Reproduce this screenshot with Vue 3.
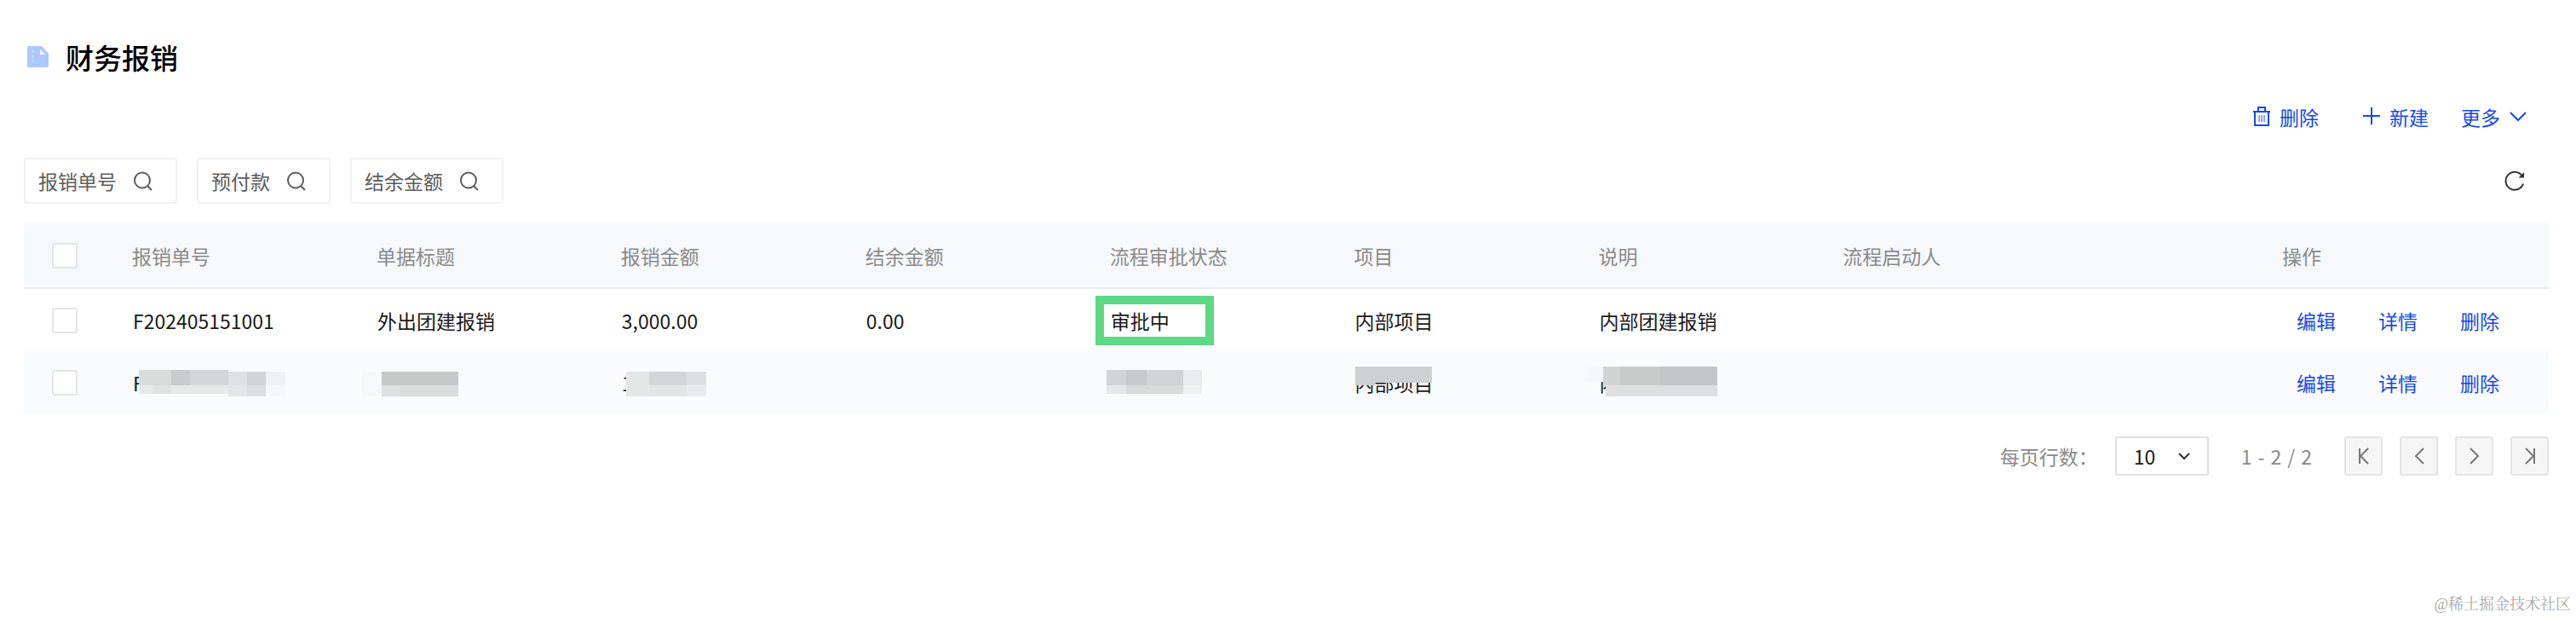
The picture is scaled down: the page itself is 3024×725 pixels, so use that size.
<template>
    <div class="page">
        <header class="title">
            <svg class="title-icon" viewBox="0 0 26 26" aria-hidden="true">
                <path d="M2 0h15l8 9v14a2 2 0 0 1-2 2H2a2 2 0 0 1-2-2V2a2 2 0 0 1 2-2z" fill="#adc8ff" />
                <path d="M15 4v6h6z" fill="#fff" />
                <path d="M6.500 5v14" stroke="#dce8ff" stroke-width="2" stroke-dasharray="2 4" />
            </svg>
            <h1>财务报销</h1>
        </header>

        <div class="toolbar">
            <button type="button" class="tool delete">
                <svg class="icon" viewBox="0 0 24 24">
                    <path d="M2 6h20M8 6V1h8v5M4 6v16h16V6" />
                    <path d="M9 10v8M12 10v8M15 10v8" stroke-width="1" />
                </svg>
                删除
            </button>
            <button type="button" class="tool">
                <svg class="icon" viewBox="0 0 24 24"><path d="M12 1v20M2 11h20" /></svg>
                新建
            </button>
            <button type="button" class="tool">
                更多
                <svg class="icon" viewBox="0 0 24 24"><path d="M3 7l9 9 9-9" /></svg>
            </button>
        </div>

        <div class="filters">
            <button v-for="name in filters" :key="name" type="button" class="filter">
                {{ name }}
                <svg class="icon" viewBox="0 0 24 24">
                    <circle cx="11" cy="11.500" r="9" />
                    <path d="M17 18l5 5" />
                </svg>
            </button>
            <button type="button" class="refresh" aria-label="刷新">
                <svg class="icon" viewBox="0 0 24 24">
                    <path d="M22 15.500A10.500 10.500 0 1 1 20.500 6" />
                    <path d="M23 2v6.500h-6.500z" fill="currentColor" stroke="none" />
                </svg>
            </button>
        </div>

        <table>
            <colgroup>
                <col class="col-check" />
                <col v-for="n in 7" :key="n" class="col-data" />
                <col />
                <col class="col-action" />
            </colgroup>
            <thead>
                <tr>
                    <th class="check"><input v-model="allChecked" type="checkbox" aria-label="全选" /></th>
                    <th v-for="col in columns" :key="col">{{ col }}</th>
                    <th>操作</th>
                </tr>
            </thead>
            <tbody>
                <tr v-for="(row, i) in rows" :key="i">
                    <td class="check"><input v-model="row.checked" type="checkbox" aria-label="选择" /></td>
                    <td v-for="(cell, j) in row.cells" :key="j">
                        {{ cell.text }}
                        <span v-if="cell.marked" class="mark"></span>
                        <svg v-if="cell.mask" class="mask" aria-hidden="true">
                            <rect v-for="(m, k) in cell.mask" :key="k" :x="m[0]" :y="m[1]" :width="m[2]" :height="m[3]" :fill="m[4]" />
                        </svg>
                    </td>
                    <td>
                        <div class="actions">
                            <a href="#" @click.prevent>编辑</a>
                            <a href="#" @click.prevent>详情</a>
                            <a href="#" @click.prevent="remove(i)">删除</a>
                        </div>
                    </td>
                </tr>
            </tbody>
        </table>

        <footer class="pagination">
            <label for="page-size">每页行数：</label>
            <div class="page-size">
                <select id="page-size" v-model="pageSize">
                    <option :value="10">10</option>
                    <option :value="20">20</option>
                    <option :value="50">50</option>
                </select>
                <svg viewBox="0 0 14 14" aria-hidden="true"><path d="M1 4l6 6 6-6" /></svg>
            </div>
            <div class="range">
                <span>1</span>
                <span>-</span>
                <span>{{ rows.length }}</span>
                <span>/</span>
                <span>{{ rows.length }}</span>
            </div>
            <div class="pager">
                <button v-for="p in pagers" :key="p.label" type="button" :aria-label="p.label">
                    <svg viewBox="0 0 24 24"><path :d="p.path" /></svg>
                </button>
            </div>
        </footer>

        <div class="watermark">@稀土掘金技术社区</div>
    </div>
</template>

<script setup>
import { ref, computed } from 'vue';

const filters = ['报销单号', '预付款', '结余金额'];
const columns = ['报销单号', '单据标题', '报销金额', '结余金额', '流程审批状态', '项目', '说明', '流程启动人'];
const pageSize = ref(10);

// mask: [x, y, width, height, color]
const rows = ref([
    {
        checked: false,
        cells: [
            { text: 'F202405151001' },
            { text: '外出团建报销' },
            { text: '3,000.00' },
            { text: '0.00' },
            { text: '审批中', marked: true },
            { text: '内部项目' },
            { text: '内部团建报销' },
            { text: '' },
        ],
    },
    {
        checked: false,
        cells: [
            {
                text: 'F',
                mask: [
                    [24, 22, 38, 18, '#dadbdb'],
                    [62, 22, 22, 18, '#cacbcb'],
                    [84, 22, 45, 18, '#d5d6d7'],
                    [129, 24, 22, 16, '#e0e1e2'],
                    [151, 24, 22, 16, '#d3d4d5'],
                    [173, 24, 23, 16, '#f0f1f2'],
                    [24, 40, 16, 10, '#e8e9eb'],
                    [40, 40, 22, 10, '#e0e1e2'],
                    [62, 40, 67, 10, '#e7e8e9'],
                    [129, 40, 22, 13, '#e4e5e6'],
                    [151, 40, 22, 13, '#dddee0'],
                    [173, 40, 23, 13, '#f7f8fb'],
                ],
            },
            {
                text: '',
                mask: [
                    [-1, 24, 23, 29, '#f7f8fb'],
                    [22, 24, 90, 16, '#c6c7c7'],
                    [22, 40, 22, 13, '#dfe0e1'],
                    [44, 40, 68, 13, '#dbdcdd'],
                ],
            },
            {
                text: '1',
                mask: [
                    [22, 24, 27, 29, '#e4e5e5'],
                    [49, 24, 44, 16, '#d4d5d6'],
                    [93, 24, 23, 16, '#dedfe1'],
                    [49, 40, 44, 13, '#e3e4e5'],
                    [93, 40, 23, 13, '#eaebed'],
                ],
            },
            { text: '' },
            {
                text: '',
                mask: [
                    [12, 22, 23, 18, '#d3d4d5'],
                    [35, 22, 24, 18, '#c8c9ca'],
                    [59, 22, 43, 18, '#d3d4d5'],
                    [102, 22, 22, 18, '#eaebed'],
                    [12, 40, 23, 10, '#e4e6e9'],
                    [35, 40, 67, 10, '#d9dadb'],
                    [102, 40, 22, 10, '#eeeff1'],
                ],
            },
            {
                text: '内部项目',
                mask: [
                    [17, 18, 23, 22, '#cfd0d1'],
                    [40, 18, 67, 19, '#cfd0d1'],
                ],
            },
            {
                text: '内',
                mask: [
                    [0, 18, 22, 18, '#f6f7fa'],
                    [22, 18, 20, 22, '#d2d3d5'],
                    [42, 18, 47, 22, '#c9cbcb'],
                    [89, 18, 67, 22, '#c5c6c8'],
                    [25, 40, 131, 13, '#dedfe1'],
                ],
            },
            { text: '' },
        ],
    },
]);

const pagers = [
    { label: '第一页', path: 'M7 3v18M17 3l-9 9 9 9' },
    { label: '上一页', path: 'M17 3l-9 9 9 9' },
    { label: '下一页', path: 'M7 3l9 9-9 9' },
    { label: '最后一页', path: 'M17 3v18M7 3l9 9-9 9' },
];

const allChecked = computed({
    get: () => rows.value.length > 0 && rows.value.every((r) => r.checked),
    set: (v) => rows.value.forEach((r) => (r.checked = v)),
});

const remove = (i) => {
    rows.value.splice(i, 1);
};
</script>

<style>
body {
    margin: 0;
    background: #fff;
}
</style>

<style scoped>
.page {
    position: relative;
    box-sizing: border-box;
    min-height: 100vh;
    padding: 43px 32px 0 28px;
    font-family: 'Noto Sans CJK SC', sans-serif;
    font-size: 23px;
    line-height: 32px;
    color: #1a1a1a;
}

button,
select {
    font: inherit;
    cursor: pointer;
}

svg {
    flex: none;
    fill: none;
    stroke: currentColor;
    stroke-width: 2;
}

.title {
    display: flex;
    align-items: center;
    gap: 19px;
    padding-left: 4px;
}

.title-icon {
    width: 26px;
    height: 26px;
    stroke: none;
}

h1 {
    margin: 0;
    font-size: 33px;
    line-height: 48px;
    font-weight: 500;
    color: #000;
}

.icon {
    width: 24px;
    height: 24px;
}

.toolbar {
    display: flex;
    justify-content: flex-end;
    gap: 38px;
    margin-top: 23px;
    padding-right: 24px;
}

.tool {
    display: flex;
    align-items: center;
    gap: 9px;
    height: 46px;
    padding: 0;
    border: 0;
    background: none;
    color: #1648e8;
}

.delete {
    margin-right: 12px;
}

.filters {
    display: flex;
    align-items: center;
    gap: 23px;
    margin-top: 25px;
}

.filter {
    display: flex;
    align-items: center;
    gap: 19px;
    box-sizing: border-box;
    height: 54px;
    padding: 0 26px 0 15px;
    border: 2px solid #f0f0f0;
    border-radius: 4px;
    background: #fff;
    color: #5c5c5c;
}

.refresh {
    display: flex;
    margin-left: auto;
    margin-right: 28px;
    padding: 0;
    border: 0;
    background: none;
    color: #333;
}

table {
    width: 100%;
    margin-top: 23px;
    table-layout: fixed;
    border-collapse: separate;
    border-spacing: 0;
}

.col-check {
    width: 111px;
}

.col-data {
    width: 9.68%;
}

.col-action {
    width: 329px;
}

th,
td {
    position: relative;
    box-sizing: border-box;
    height: 73px;
    padding: 0 0 0 17px;
    text-align: left;
    white-space: nowrap;
}

th {
    height: 77px;
    padding-left: 16px;
    border-bottom: 2px solid #ebedf0;
    background: #f6f8fc;
    font-weight: 400;
    color: #8a8a8a;
}

tbody tr:nth-child(even) td {
    background: #fafbff;
}

.check {
    padding-left: 33px;
}

input[type='checkbox'] {
    display: block;
    appearance: none;
    box-sizing: border-box;
    width: 30px;
    height: 30px;
    margin: 0;
    border: 2px solid #e4e4e6;
    border-radius: 3px;
    background: #fff;
}

input[type='checkbox']:checked {
    background: #1648e8;
}

.actions {
    display: flex;
    gap: 50px;
    padding-left: 16px;
}

a {
    color: #1648e8;
    text-decoration: none;
}

.mark {
    position: absolute;
    top: 8px;
    left: -1px;
    box-sizing: border-box;
    width: 139px;
    height: 58px;
    border: 10px solid #5dd986;
}

.mask {
    position: absolute;
    top: 0;
    left: 0;
    width: 100%;
    height: 100%;
    overflow: visible;
    stroke: none;
}

.pagination {
    display: flex;
    align-items: center;
    justify-content: flex-end;
    margin-top: 27px;
    color: #8a8a8a;
}

.page-size {
    position: relative;
    margin: 0 38px 0 20px;
}

.page-size svg {
    position: absolute;
    top: 16px;
    right: 22px;
    width: 14px;
    height: 14px;
    color: #333;
    pointer-events: none;
}

select {
    display: block;
    appearance: none;
    box-sizing: border-box;
    width: 110px;
    height: 46px;
    padding: 0 0 0 20px;
    border: 2px solid #e0e0e0;
    border-radius: 3px;
    background: #fff;
    color: #1a1a1a;
}

.range {
    display: flex;
    gap: 7px;
}

.pager {
    display: flex;
    gap: 20px;
    margin-left: 38px;
}

.pager button {
    display: flex;
    align-items: center;
    justify-content: center;
    box-sizing: border-box;
    width: 45px;
    height: 46px;
    padding: 0;
    border: 2px solid #e4e4e4;
    border-radius: 3px;
    background: #f5f5f5;
    color: #777;
}

.pager svg {
    width: 24px;
    height: 24px;
}

.watermark {
    position: absolute;
    right: 6px;
    bottom: 2px;
    font-family: 'Liberation Serif', 'Noto Serif CJK SC', 'Noto Sans CJK SC', serif;
    font-size: 18px;
    line-height: 28px;
    color: #a8a8a8;
}
</style>
